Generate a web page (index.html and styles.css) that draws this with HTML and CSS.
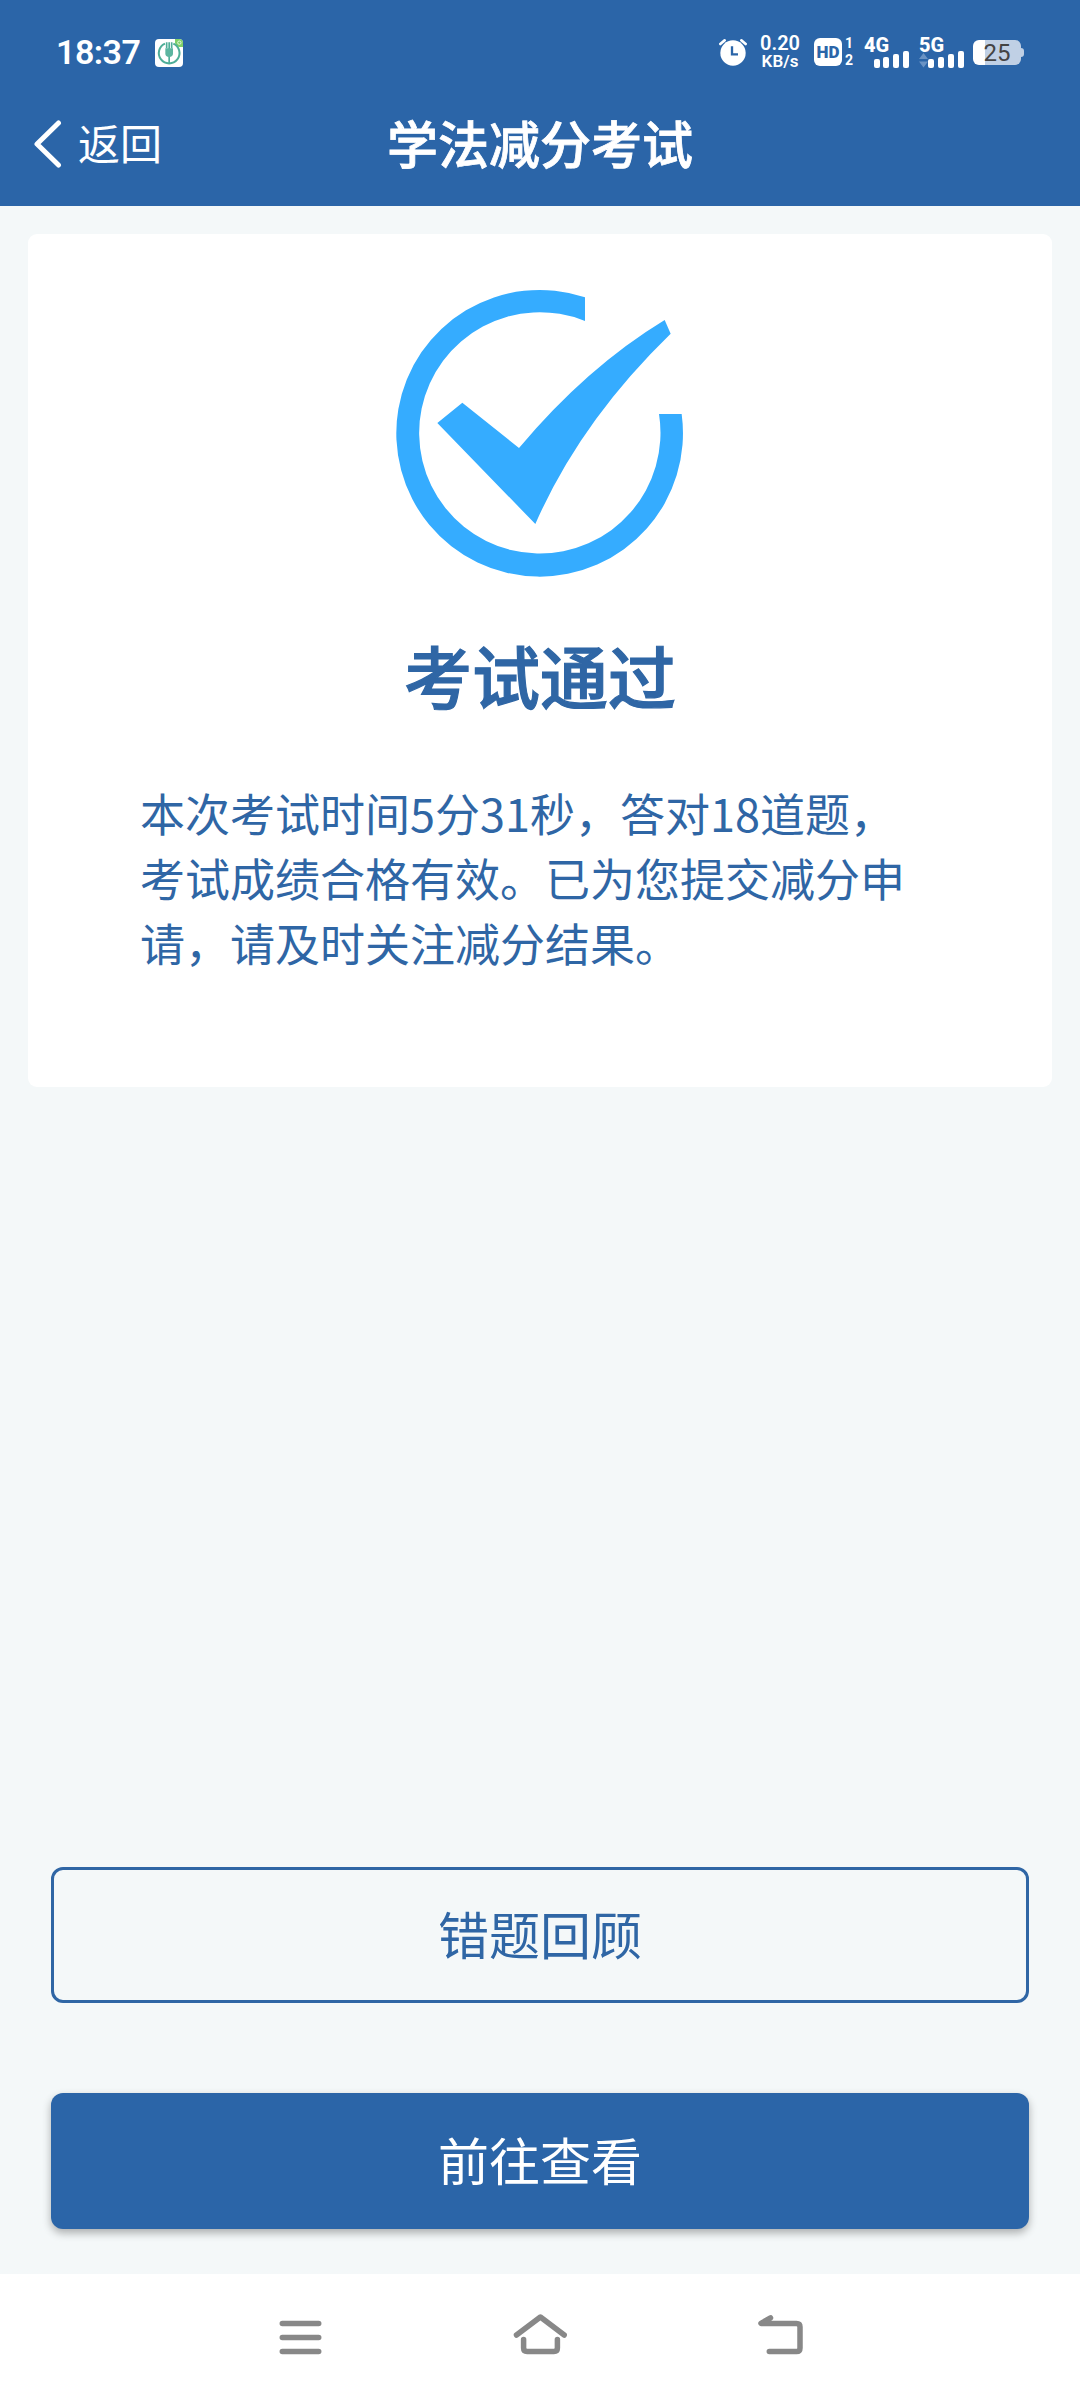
FILE: index.html
```html
<!DOCTYPE html>
<html lang="zh-CN">
<head>
    <meta charset="UTF-8">
    <meta name="viewport" content="width=device-width, initial-scale=1.0">
    <title>学法减分考试</title>
    <link rel="stylesheet" href="styles.css">
</head>
<body>
    <header>
        <div class="status-bar">
            <span class="time">18:37</span>
            <svg class="app-icon" width="28" height="28" viewBox="0 0 84 84">
                <rect width="84" height="84" rx="12" fill="#fff"/>
                <path d="M60 0h12a12 12 0 0 1 12 12v12H74a14 14 0 0 1-14-14z" fill="#7fd068"/>
                <circle cx="73" cy="11" r="5" fill="none" stroke="#e4f7dc" stroke-width="3"/>
                <path d="M30 14a31 31 0 1 0 25 0" fill="none" stroke="#4fae98" stroke-width="6"/>
                <path d="M42.500 10v62M35 10v18M50 10v18" stroke="#4fae98" stroke-width="5"/>
                <path d="M31 28h23v16q0 8-11.500 10q-11.500-2-11.500-10z" fill="#5cb5a0"/>
            </svg>
            <div class="status-icons">
                <svg class="alarm" width="28" height="28" viewBox="0 0 84 84">
                    <circle cx="42" cy="45" r="38" fill="#fff"/>
                    <path d="M4 18L17 7M80 18L67 7" stroke="#fff" stroke-width="8" stroke-linecap="round"/>
                    <path d="M39 25v24h18" fill="none" stroke="#2b65a8" stroke-width="7"/>
                </svg>
                <div class="speed"><b>0.20</b><span>KB/s</span></div>
                <div class="hd"><span class="hd-box">HD</span><span class="sims"><i>1</i><i>2</i></span></div>
                <div class="signal">
                    <span>4G</span>
                    <svg width="36" height="17" viewBox="0 0 36 17" fill="#fff">
                        <rect x="1" y="8" width="6" height="9" rx="2"/>
                        <rect x="10" y="6" width="6" height="11" rx="2"/>
                        <rect x="20" y="3" width="6" height="14" rx="2"/>
                        <rect x="30" y="0" width="6" height="17" rx="2"/>
                    </svg>
                </div>
                <div class="signal">
                    <span>5G</span>
                    <svg width="45" height="17" viewBox="0 0 45 17" fill="#fff">
                        <path d="M0 8l4.500-6L9 8zM0 10.500h9L4.500 16.500z" fill="#6a93c4"/>
                        <rect x="9" y="8" width="6" height="9" rx="2"/>
                        <rect x="19" y="6" width="6" height="11" rx="2"/>
                        <rect x="29" y="3" width="6" height="14" rx="2"/>
                        <rect x="39" y="0" width="6" height="17" rx="2"/>
                    </svg>
                </div>
                <div class="battery"><span>25</span></div>
            </div>
        </div>
        <nav class="title-bar">
            <a class="back">
                <svg width="30" height="50" viewBox="0 0 30 50">
                    <path d="M26.500 4L5 25L26.500 46" fill="none" stroke="#fff" stroke-width="5" stroke-linecap="round" stroke-linejoin="round"/>
                </svg>
                <span>返回</span>
            </a>
            <h1>学法减分考试</h1>
        </nav>
    </header>

    <main>
        <section class="result">
            <svg class="check" width="320" height="320" viewBox="0 0 960 960" fill="#35acff">
                <path d="M615 82A430 430 0 1 0 905 432H837A362 362 0 1 1 615 153Z"/>
                <path d="M172 459L247 398L417 534Q620 292 854 150L872 191Q600 455 466 762Z"/>
            </svg>
            <h2>考试通过</h2>
            <p>本次考试时间5分31秒，答对18道题，<br>考试成绩合格有效。已为您提交减分申<br>请，请及时关注减分结果。</p>
        </section>

        <div class="actions">
            <button class="btn btn-outline">错题回顾</button>
            <button class="btn btn-primary">前往查看</button>
        </div>
    </main>

    <footer class="system-nav">
        <svg width="60" height="60" viewBox="0 0 60 60">
            <path d="M12.300 19.400h36.400M12.300 33.500h36.400M12.300 47.600h36.400"/>
        </svg>
        <svg width="60" height="60" viewBox="0 0 60 60">
            <path d="M6.500 31L30.400 13L54.200 31M13.600 35.500V44q0 3.500 3.500 3.500H43.900q3.500 0 3.500-3.500V35.500"/>
        </svg>
        <svg width="60" height="60" viewBox="0 0 60 60">
            <path d="M20.500 13.800L11 19.400H46.500q3.500 0 3.500 3.500V44q0 3.600-3.500 3.600H19.300"/>
        </svg>
    </footer>
</body>
</html>
```

FILE: styles.css
```css
* {
    box-sizing: border-box;
}
body {
    font-family: "Noto Sans CJK SC", sans-serif;
    margin: 0;
    height: 2400px;
    display: flex;
    flex-direction: column;
    background-color: #f4f8f9;
    color: #2f66a5;
}
svg {
    display: block;
    flex: none;
}
header {
    height: 206px;
    background-color: #2b65a8;
    color: white;
}

/* status bar */
.status-bar {
    height: 84px;
    padding: 20px 59px 0 56px;
    display: flex;
    align-items: center;
    font-family: Roboto, sans-serif;
}
.time {
    width: 85px;
    font-size: 34px;
    font-weight: 600;
    letter-spacing: -0.5px;
    white-space: nowrap;
}
.app-icon {
    margin-left: 14px;
    margin-top: 2px;
}
.status-icons {
    margin-left: auto;
    display: flex;
    align-items: center;
    height: 34px;
}
.speed {
    width: 40px;
    margin-left: 13px;
    text-align: center;
    font-weight: 600;
}
.speed b,
.speed span {
    display: block;
    font-size: 20px;
    line-height: 18px;
    font-weight: 600;
}
.speed span {
    font-size: 17px;
}
.hd {
    display: flex;
    align-items: center;
    margin-left: 14px;
    gap: 2px;
}
.hd-box {
    width: 28px;
    height: 28px;
    border-radius: 6px;
    background: white;
    color: #2b65a8;
    font-size: 17px;
    font-weight: 900;
    line-height: 28px;
    text-align: center;
}
.sims {
    display: flex;
    flex-direction: column;
    width: 10px;
}
.sims i {
    font-style: normal;
    font-weight: 700;
    font-size: 14px;
    line-height: 17px;
    text-align: center;
}
.signal {
    width: 45px;
    margin-left: 10px;
    display: flex;
    flex-direction: column;
    align-items: flex-end;
}
.signal span {
    align-self: flex-start;
    font-size: 20px;
    line-height: 16px;
    font-weight: 800;
    margin-bottom: -2px;
}
.battery {
    position: relative;
    width: 48px;
    height: 25px;
    margin-left: 9px;
    border-radius: 6px;
    background: linear-gradient(to right, white 12px, #c0d0e5 12px);
    color: #444;
    font-size: 24px;
    line-height: 26px;
    text-align: center;
}
.battery::after {
    content: "";
    position: absolute;
    left: 48px;
    top: 8px;
    width: 3px;
    height: 9px;
    border-radius: 0 3px 3px 0;
    background: #c0d0e5;
}

/* title bar */
.title-bar {
    height: 122px;
    display: grid;
    grid-template-columns: 1fr auto 1fr;
    align-items: center;
    padding: 0 32px 2px;
}
.back {
    display: flex;
    align-items: center;
    gap: 16px;
    font-size: 42px;
    line-height: 60px;
}
.back span {
    margin-bottom: 4px;
}
h1 {
    margin: 0;
    padding-bottom: 5px;
    font-size: 51px;
    line-height: 74px;
    font-weight: 500;
    -webkit-text-stroke: 0.8px white;
}

/* result card */
main {
    flex: 1;
    display: flex;
    flex-direction: column;
    padding: 28px 28px 45px;
}
.result {
    height: 853px;
    padding-top: 36px;
    border-radius: 9px;
    background-color: white;
}
.check {
    margin: 0 auto;
}
h2 {
    margin: 36px 0 0;
    font-size: 68px;
    line-height: 98px;
    font-weight: 500;
    -webkit-text-stroke: 1.2px #2f66a5;
    text-align: center;
}
.result p {
    margin: 56px 112px 0;
    font-size: 45px;
    line-height: 65px;
    white-space: nowrap;
}

/* buttons */
.actions {
    margin-top: auto;
    padding: 0 23px;
    display: flex;
    flex-direction: column;
    gap: 90px;
}
.btn {
    height: 136px;
    padding: 0 0 5px;
    border: none;
    border-radius: 12px;
    font-family: inherit;
    font-size: 51px;
    cursor: pointer;
}
.btn-outline {
    border: 3px solid #2f66a5;
    background: transparent;
    color: #2f66a5;
}
.btn-primary {
    background-color: #2b65a8;
    color: white;
    box-shadow: 0 4px 8px rgba(0, 0, 0, 0.3);
}

/* system navigation */
.system-nav {
    height: 126px;
    padding: 30px 270px 0;
    display: flex;
    justify-content: space-between;
    background-color: white;
}
.system-nav path {
    fill: none;
    stroke: #888;
    stroke-width: 5.500px;
    stroke-linecap: round;
    stroke-linejoin: round;
}
```
